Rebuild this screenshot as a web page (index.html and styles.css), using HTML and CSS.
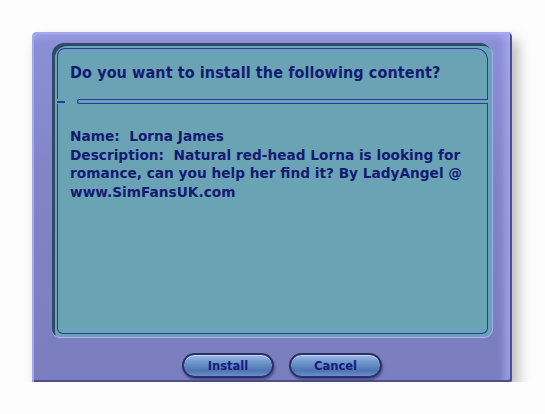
FILE: index.html
```html
<!DOCTYPE html>
<html lang="en">
<head>
    <meta charset="UTF-8">
    <title>Install Content</title>
    <link rel="stylesheet" href="styles.css">
</head>
<body>
    <div class="frame">
        <div class="panel">
            <div class="header">
                <h1>Do you want to install the following content?</h1>
            </div>
            <div class="divider">
                <span class="stub"></span>
                <span class="rule"></span>
            </div>
            <div class="content">
                <p>Name:&nbsp; Lorna James</p>
                <p>Description:&nbsp; Natural red-head Lorna is looking for romance, can you help her find it? By LadyAngel @ www.SimFansUK.com</p>
            </div>
        </div>
        <div class="buttons">
            <button class="btn install">Install</button>
            <button class="btn cancel">Cancel</button>
        </div>
    </div>
</body>
</html>
```

FILE: styles.css
```css
* {
    margin: 0;
    padding: 0;
    box-sizing: border-box;
}

body {
    background: #fdfdfd;
    font-family: "DejaVu Sans", Verdana, sans-serif;
    padding: 32px 0 0 32px;
}

.frame {
    width: 480px;
    height: 350px;
    background: linear-gradient(180deg, #8c90d6 0%, #8185c8 40%, #7a7dbe 100%);
    border-radius: 5px 5px 2px 2px;
    box-shadow:
        inset 2px 2px 0 #a4a8ee,
        inset -2px -2px 0 #4c4f90,
        inset -10px 0 6px -2px rgba(176, 180, 250, 0.55),
        inset 0 8px 6px -2px rgba(176, 180, 250, 0.45),
        6px 8px 14px rgba(0, 0, 0, 0.28);
    padding: 11px 20px 0 20px;
}

.panel {
    height: 294px;
    background: #6aa4b4;
    border-radius: 12px 12px 8px 8px;
    box-shadow: inset 3px 3px 0 #2f4a68, 0 1px 0 #b0b4f0, 1px 0 0 #a6aaf0;
    padding: 5px 4px 3px 5px;
    display: flex;
    flex-direction: column;
}

.header {
    height: 51px;
    border: 1px solid #2a3a9c;
    border-bottom: none;
    border-radius: 8px 12px 0 0;
    padding: 14px 0 0 12px;
}

h1 {
    font-family: "DejaVu Sans Condensed", "DejaVu Sans", sans-serif;
    font-size: 16px;
    font-weight: bold;
    color: #141a72;
    letter-spacing: 0.1px;
}

.divider {
    height: 5px;
    display: flex;
    align-items: center;
    gap: 12px;
}

.stub {
    width: 8px;
    height: 2px;
    background: #2a3a9c;
}

.rule {
    flex: 1;
    height: 5px;
    border: 1px solid #2a3a9c;
    border-right: none;
    border-radius: 3px 0 0 3px;
}

.content {
    flex: 1;
    border: 1px solid #2a3a9c;
    border-top: none;
    border-radius: 0 0 6px 6px;
    padding: 23px 14px 0 12px;
    color: #141a72;
    font-size: 13.7px;
    font-weight: bold;
    line-height: 18.6px;
}

.buttons {
    display: flex;
    gap: 15px;
    padding: 16px 0 0 130px;
}

.btn {
    width: 92px;
    height: 25px;
    border-radius: 13px;
    border: 2px solid #2c3068;
    background: linear-gradient(180deg, #9cbbe6 0%, #6e96cc 35%, #4e74b2 75%, #6a8fc8 100%);
    box-shadow: inset 0 1px 0 #c6d8f4, 1px 2px 2px rgba(30, 30, 80, 0.45);
    color: #161c7c;
    font-family: "DejaVu Sans", Verdana, sans-serif;
    font-size: 11.5px;
    font-weight: bold;
}

.cancel {
    width: 93px;
}
```
